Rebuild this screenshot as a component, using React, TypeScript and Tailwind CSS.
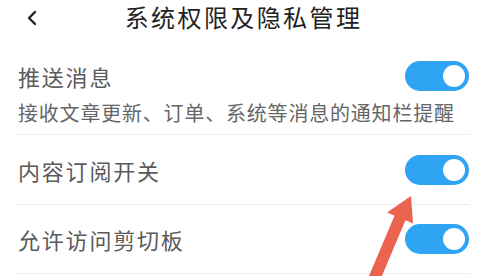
import { ChevronLeft } from 'lucide-react'

const font = { fontFamily: '"Noto Sans CJK SC", "Noto Sans", sans-serif' }

function Toggle() {
  return (
    <div className="w-[64px] h-[30px] rounded-full bg-[#2ea4f3] flex items-center justify-end pr-[4px]">
      <div className="w-[22px] h-[22px] rounded-full bg-white" />
    </div>
  )
}

export default function App() {
  return (
    <div className="relative w-[487px] h-[276px] bg-white overflow-hidden" style={font}>
      {/* header */}
      <header className="relative h-[34px] flex items-center justify-center">
        <ChevronLeft className="absolute left-[20px] top-[6px] text-[#222]" size={24} strokeWidth={2.4} />
        <h1 className="text-[24px] tracking-[2.4px] text-[#222] leading-none">系统权限及隐私管理</h1>
      </header>

      <div className="mx-[17px]">
        {/* 推送消息 */}
        <div className="pt-[26px] pb-[10px] border-b border-[#ececec]">
          <div className="h-[32px] flex items-center justify-between">
            <span className="text-[22px] tracking-[1.8px] text-[#5a5a5a] leading-none pl-[1px]">推送消息</span>
            <div className="mr-[1px]"><Toggle /></div>
          </div>
          <p className="mt-[10px] h-[22px] flex items-center text-[20px] tracking-[0.8px] text-[#666] leading-none pl-[1px] whitespace-nowrap">
            接收文章更新、订单、系统等消息的通知栏提醒
          </p>
        </div>

        {/* 内容订阅开关 */}
        <div className="h-[70px] flex items-center justify-between border-b border-[#ececec]">
          <span className="text-[22px] tracking-[1.8px] text-[#5a5a5a] leading-none pl-[1px]">内容订阅开关</span>
          <div className="mr-[1px]"><Toggle /></div>
        </div>

        {/* 允许访问剪切板 */}
        <div className="h-[69px] flex items-center justify-between border-b border-[#ececec]">
          <span className="text-[22px] tracking-[1.8px] text-[#5a5a5a] leading-none pl-[1px]">允许访问剪切板</span>
          <div className="mr-[1px]"><Toggle /></div>
        </div>
      </div>

      {/* annotation arrow */}
      <svg className="absolute left-0 top-0 pointer-events-none" width="487" height="276" viewBox="0 0 487 276">
        <polygon
          points="411,196 413,223.5 405.5,220.3 375,292.3 364,287.7 394.5,215.7 387,212.5"
          fill="#ea6450"
        />
      </svg>
    </div>
  )
}
